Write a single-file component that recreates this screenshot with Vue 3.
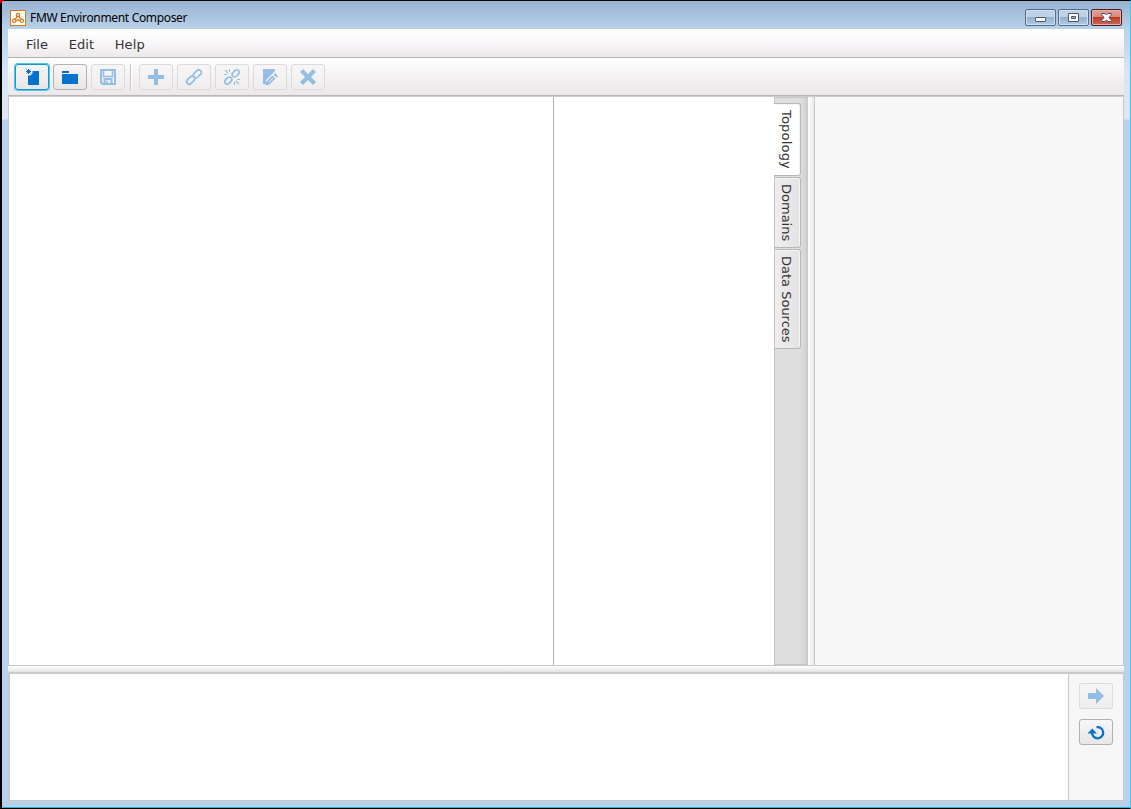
<script setup>
import { ref } from 'vue'

const menus = ['File', 'Edit', 'Help']
const tabs = ['Topology', 'Domains', 'Data Sources']
const activeTab = ref('Topology')

const tools = [
  { name: 'new', enabled: true },
  { name: 'open', enabled: true },
  { name: 'save', enabled: false },
  { name: 'separator' },
  { name: 'add', enabled: false },
  { name: 'link', enabled: false },
  { name: 'unlink', enabled: false },
  { name: 'edit', enabled: false },
  { name: 'delete', enabled: false }
]
</script>

<template>
  <div class="window">
    <header class="title-bar">
      <svg class="app-icon" width="16" height="16" viewBox="0 0 16 16">
        <rect x=".5" y=".5" width="15" height="15" fill="#fff" stroke="#e07618" />
        <g fill="none" stroke="#e07618" stroke-width="1.2">
          <circle cx="8" cy="5" r="1.7" />
          <circle cx="4.200" cy="10.800" r="1.700" />
          <circle cx="11.800" cy="10.800" r="1.700" />
          <path d="M6.700 5.500v2L5 9.200M9.300 5.500v2L11 9.200M6 11l2-1.500 2 1.500" />
        </g>
      </svg>
      <span class="title">FMW Environment Composer</span>
      <div class="controls">
        <button class="control">
          <svg width="29" height="15" viewBox="0 0 29 15">
            <rect x="9.5" y="7.5" width="10" height="4" rx=".5" fill="#fff" stroke="#535666" />
          </svg>
        </button>
        <button class="control">
          <svg width="29" height="15" viewBox="0 0 29 15">
            <path d="M9.500 3.500h10v8h-10z" fill="#fff" stroke="#535666" />
            <path d="M12.500 6.500h4v2h-4z" fill="#9bb6d2" stroke="#535666" />
          </svg>
        </button>
        <button class="control control--close">
          <svg width="29" height="15" viewBox="0 0 29 15">
            <path d="M9.500 3.500h3.500l1.500 1.500 1.500-1.500h3.500v1l-2.500 3 2.500 3v1H16L14.500 10 13 11.500H9.500v-1l2.500-3-2.500-3z" fill="#fff" stroke="#5a4d5e" />
          </svg>
        </button>
      </div>
    </header>

    <div class="client">
      <nav class="menu-bar">
        <span v-for="menu in menus" :key="menu" class="menu">{{ menu }}</span>
      </nav>

      <div class="toolbar">
        <template v-for="tool in tools" :key="tool.name">
          <i v-if="tool.name === 'separator'" class="separator"></i>
          <button
            v-else
            class="tool"
            :class="{ 'tool--disabled': !tool.enabled, 'tool--focused': tool.name === 'new' }"
          >
            <svg width="18" height="18" viewBox="0 0 18 18">
              <g v-if="tool.name === 'new'">
                <path d="M9.500 3H16v14H5V7.500h2.500l2-2z" fill="#0572ce" />
                <path d="M5.500 1v5M3 3.500h5M3.500 1.500l4 4M7.500 1.500l-4 4" stroke="#0572ce" />
              </g>
              <g v-else-if="tool.name === 'open'" fill="#0572ce">
                <path d="M1 3h7v2H1zM1 6h16v10H1z" />
              </g>
              <g v-else-if="tool.name === 'save'" fill="none" stroke="#0572ce">
                <path d="M2 2h14v14H3.500L2 14.500z" stroke-width="2" />
                <path d="M4.500 2v6.500h9V2" stroke-width="1.500" />
                <path d="M5.500 16v-5h7v5" stroke-width="2" />
                <path d="M8 12.500V15" stroke-width="1.500" />
              </g>
              <path v-else-if="tool.name === 'add'" d="M7 1h4v6h6v4h-6v6H7v-6H1V7h6z" fill="#0572ce" />
              <g v-else-if="tool.name === 'link'" fill="none" stroke="#0572ce" stroke-width="1.700">
                <rect x="-4.500" y="-2.600" width="9" height="5.200" rx="2.600" transform="translate(12.300 5.800) rotate(-45)" />
                <rect x="-4.500" y="-2.600" width="9" height="5.200" rx="2.600" transform="translate(5.700 12.200) rotate(-45)" />
              </g>
              <g v-else-if="tool.name === 'unlink'" fill="none" stroke="#0572ce" stroke-width="1.700">
                <rect x="-4" y="-2.500" width="8" height="5" rx="2.500" transform="translate(12.700 5.400) rotate(-45)" />
                <rect x="-4" y="-2.500" width="8" height="5" rx="2.500" transform="translate(5.300 12.600) rotate(-45)" />
                <path d="M6.500 1v3M2 2l3 3M1 6.500h3M11.500 14v3M13 13l3 3M14 11.500h3" stroke-width="1.200" />
              </g>
              <g v-else-if="tool.name === 'edit'">
                <path d="M2 1h12v2L5 12v4H2z" fill="#0572ce" />
                <path d="m5.500 13.500 6-6 3 3-6 6-4 1z" fill="#0572ce" />
                <path d="m7.500 14.500 4.500-4.500" stroke="#f4f1f3" />
                <path d="m12.600 6.400 1.400-1.400 3 3-1.400 1.400z" fill="#0572ce" />
              </g>
              <path v-else d="M2.500 2.500 15.500 15.500M15.500 2.500 2.500 15.500" stroke="#0572ce" stroke-width="4.200" />
            </svg>
          </button>
        </template>
      </div>

      <main class="workspace">
        <section class="canvas"></section>
        <section class="palette"></section>
        <aside class="tab-strip">
          <div
            v-for="tab in tabs"
            :key="tab"
            class="tab"
            :class="{ 'tab--active': tab === activeTab }"
            @click="activeTab = tab"
          >
            <span>{{ tab }}</span>
          </div>
        </aside>
        <div class="splitter"></div>
        <section class="properties"></section>
      </main>

      <div class="row-splitter"></div>

      <footer class="bottom">
        <div class="output"></div>
        <div class="actions">
          <button class="tool tool--disabled">
            <svg width="18" height="18" viewBox="0 0 18 18">
              <path d="M1 6h8V1l8 8-8 8v-5H1z" fill="#0572ce" />
            </svg>
          </button>
          <button class="tool">
            <svg width="18" height="18" viewBox="0 0 18 18">
              <path d="M9.500 4.200A5.600 5.600 0 1 1 5 9.500" fill="none" stroke="#0572ce" stroke-width="2.300" />
              <path d="M.5 10.500 5.200 5.500l4.800 5z" fill="#0572ce" />
            </svg>
          </button>
        </div>
      </footer>
    </div>
  </div>
</template>

<style>
body {
  margin: 0;
  overflow: hidden;
}
</style>

<style scoped>
.window {
  box-sizing: border-box;
  width: 1131px;
  height: 809px;
  padding: 0 6px 7px;
  display: flex;
  flex-direction: column;
  position: relative;
  border: solid #000;
  border-width: 1px 1px 1px 2px;
  border-right-color: #35cbed;
  box-shadow: inset 0 -1px #20b6d8;
  background: linear-gradient(#98b4d2, #b9d1ea 28px, #d7e4f2 70px, #dfe9f5 118px, #b9d1ea 119px);
  font-family: "DejaVu Sans", sans-serif;
}

/* desktop showing behind the rounded corner */
.window::before {
  content: "";
  position: absolute;
  top: -1px;
  left: -2px;
  border-top: 4px solid #e00000;
  border-right: 4px solid transparent;
}

.title-bar {
  height: 28px;
  flex: none;
  display: flex;
  align-items: center;
  padding: 5px 2px 0 2px;
  box-sizing: border-box;
}

.title {
  margin-left: 4px;
  font: 12px/20px "Noto Sans", sans-serif;
  letter-spacing: -0.33px;
  color: #000;
}

.controls {
  margin-left: auto;
  display: flex;
  gap: 2px;
}

.control {
  width: 31px;
  height: 17px;
  padding: 0;
  border: 1px solid #546b87;
  border-radius: 2px;
  box-shadow: inset 0 0 0 1px #d0e0f1;
  background: linear-gradient(#bed1e6 50%, #94b0cf 50%, #b2cce6);
}

.control svg {
  display: block;
}

.control--close {
  border-color: #471f2b;
  box-shadow: inset 0 0 0 1px #e6aea5;
  background: linear-gradient(#e5a096, #d98476 50%, #b93c29 50%, #cb6b50);
}

.client {
  flex: 1;
  min-height: 0;
  display: flex;
  flex-direction: column;
  background: #f6f6f6;
}

.menu-bar {
  height: 29px;
  flex: none;
  display: flex;
  align-items: center;
  gap: 20.5px;
  padding: 2px 18px 0;
  box-sizing: border-box;
  border-bottom: 1px solid #b5b2b4;
  background: linear-gradient(#fff 10%, #f8f6f8 50%, #ece9eb);
  font-size: 13px;
  color: #333;
}

.menu {
  letter-spacing: 0.1px;
}

.toolbar {
  height: 39px;
  flex: none;
  display: flex;
  align-items: center;
  gap: 4px;
  padding: 0 7px;
  box-sizing: border-box;
  border-bottom: 1px solid #cfccce;
  box-shadow: inset 0 -1px #b7b7b7;
  background: linear-gradient(#fff, #f7f5f6 35%, #f0edef 65%, #ebe7ea);
}

.separator {
  width: 1px;
  height: 26px;
  margin: 0 4px 0 1px;
  background: #c5c5c5;
  box-shadow: 1px 0 #fff;
}

.tool {
  width: 34px;
  height: 26px;
  padding: 0;
  box-sizing: border-box;
  display: flex;
  align-items: center;
  justify-content: center;
  border: 1px solid #b3b1b3;
  border-radius: 3px;
  background: linear-gradient(#f8f6f7, #e7e5e6);
}

.tool--focused {
  border-color: #0a9bd1;
  box-shadow: 0 0 0 1px #55c5e8;
}

.tool--disabled {
  border-color: #dcdadc;
  background: linear-gradient(#f8f5f7, #f0edef);
}

.tool--disabled svg {
  opacity: 0.4;
}

.workspace {
  height: 569px;
  flex: none;
  display: flex;
  box-sizing: border-box;
  border: solid #c9c9c9;
  border-width: 0 1px 1px;
}

.canvas {
  width: 544px;
  border-right: 1px solid #b2b2b2;
  background: #fff;
}

.palette {
  flex: 1;
  background: #fff;
}

.tab-strip {
  width: 34px;
  padding: 5px 7px 0 0;
  box-sizing: border-box;
  display: flex;
  flex-direction: column;
  gap: 1px;
  border: 1px solid #c6c6c6;
  border-right: 0;
  background: linear-gradient(90deg, #dedede 75%, #d6d6d6 90%, #c7c7c7);
}

.tab {
  height: 71px;
  width: 26px;
  padding-right: 2px;
  box-sizing: border-box;
  display: flex;
  align-items: center;
  justify-content: center;
  writing-mode: vertical-rl;
  border: 1px solid #b8b8b8;
  border-left: 0;
  border-radius: 0 3px 3px 0;
  background: linear-gradient(90deg, #f0edef, #e5e2e4);
  box-shadow: inset -1px 1px #f5f5f5;
  font-size: 13px;
  color: #333;
}

.tab:first-child {
  height: 73px;
  letter-spacing: 0.2px;
}

.tab:last-child {
  height: 100px;
}

.tab--active {
  margin-left: -1px;
  width: 27px;
  background: #fff;
}

.splitter {
  width: 6px;
  border-right: 1px solid #c8c8c8;
  background: linear-gradient(90deg, #fff, #ece8ea);
}

.properties {
  width: 308px;
  background: #f7f7f7;
}

.row-splitter {
  height: 6px;
  flex: none;
  background: linear-gradient(#fff, #f0eeef 60%, #e3e1e2);
}

.bottom {
  flex: 1;
  display: flex;
  border: solid #c9c9c9;
  border-width: 2px 1px 1px 0;
  background: #f6f6f6;
}

.output {
  width: 1058px;
  border: solid #c9c9c9;
  border-width: 0 1px 0 2px;
  background: #fff;
}

.actions {
  flex: 1;
  display: flex;
  flex-direction: column;
  align-items: center;
  gap: 10px;
  padding-top: 9px;
}
</style>
